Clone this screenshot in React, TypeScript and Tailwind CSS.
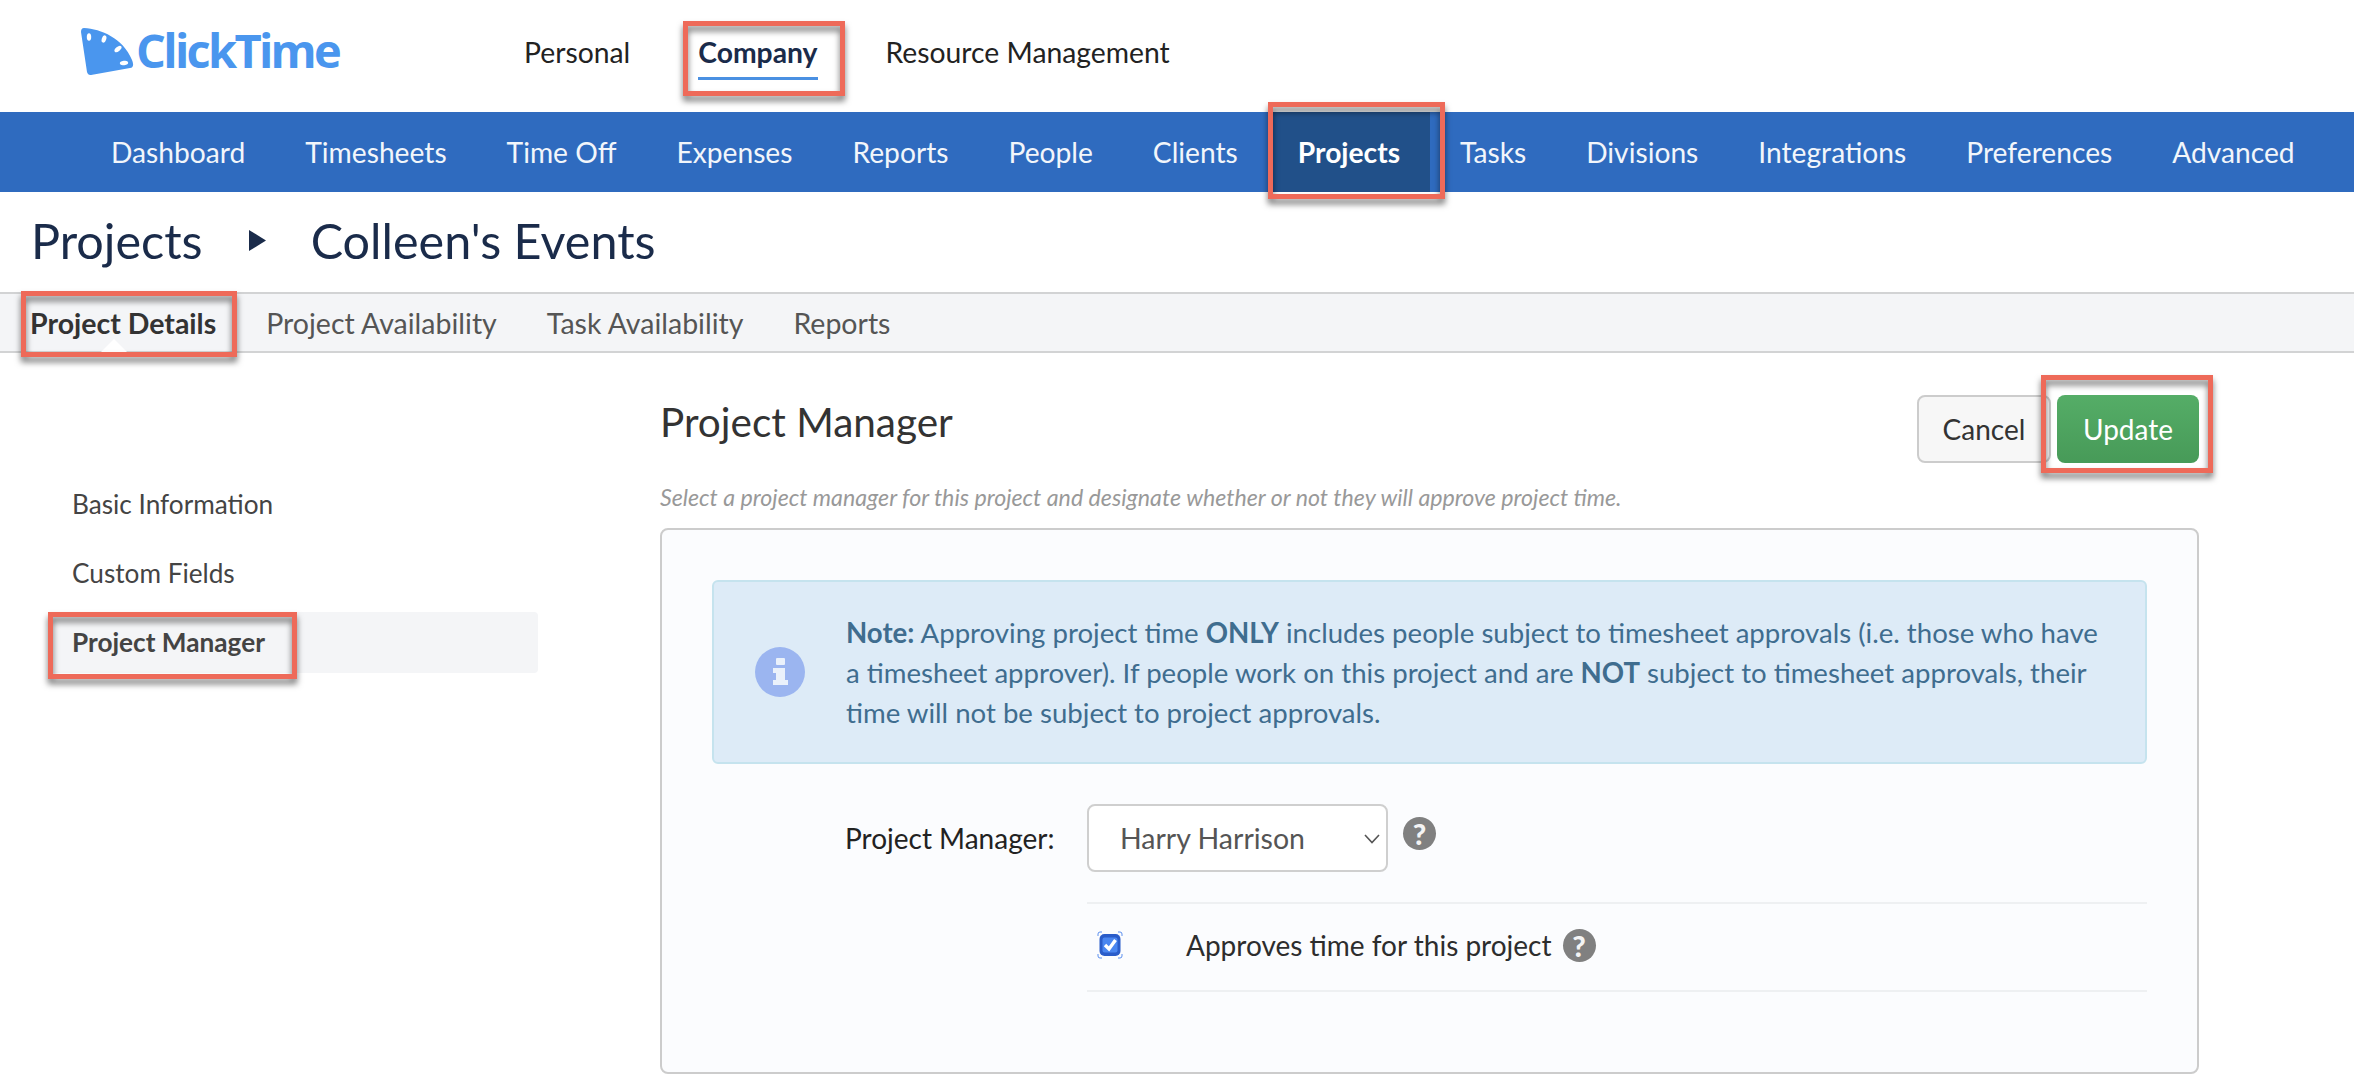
import { FC } from 'react'

const topLinks = ['Personal', 'Company', 'Resource Management']
const navLinks = [
  'Dashboard',
  'Timesheets',
  'Time Off',
  'Expenses',
  'Reports',
  'People',
  'Clients',
  'Projects',
  'Tasks',
  'Divisions',
  'Integrations',
  'Preferences',
  'Advanced',
]
const tabs = ['Project Details', 'Project Availability', 'Task Availability', 'Reports']

// the red marker rectangles drawn over the screenshot
const Marker: FC<{ className: string }> = ({ className }) => (
  <div
    className={`absolute pointer-events-none border-[5px] border-[#ee6a59] drop-shadow-[0_5px_3px_rgba(0,0,0,0.55)] ${className}`}
  />
)

const Help: FC = () => (
  <span className="flex h-[33px] w-[33px] shrink-0 items-center justify-center rounded-full bg-[#808080] text-[29px] font-black leading-none text-[#f4f4f4]">
    ?
  </span>
)

const Logo: FC = () => (
  <div className="flex items-start">
    <svg width="53" height="48" viewBox="0 0 53 48" className="mt-[3px]">
      <path
        d="M3 0 C20 1 42 10 51 32 Q54 39 49 40 L10 47 Q7 47.5 6 44 L0 4 Q0 0 3 0 Z"
        fill="#4a96ee"
      />
      <ellipse cx="8" cy="9" rx="2.2" ry="3.8" fill="#fff" />
      <ellipse cx="23" cy="11" rx="2.2" ry="3.8" transform="rotate(18 23 11)" fill="#fff" />
      <ellipse cx="37" cy="21" rx="2.2" ry="4.2" transform="rotate(50 37 21)" fill="#fff" />
      <ellipse cx="43" cy="35" rx="4.2" ry="2.2" transform="rotate(-8 43 35)" fill="#fff" />
    </svg>
    <span className="ml-[2px] font-['Open_Sans',sans-serif] text-[47px] font-bold leading-[50px] tracking-[-2.7px] text-[#4a96ee]">
      ClickTime
    </span>
  </div>
)

const Header: FC = () => (
  <div className="flex h-[112px] items-start bg-white pl-[81px]">
    <div className="w-[443px] pt-[25px]">
      <Logo />
    </div>
    <div className="flex gap-[68px] pt-[35px] text-[28.3px] leading-[34px] text-[#222]">
      {topLinks.map((link) => (
        <div
          key={link}
          className={`relative border-b-[3px] pb-[8px] ${
            link === 'Company' ? 'border-[#4a90e2] font-bold text-[#1a2b4a]' : 'border-transparent'
          }`}
        >
          {link}
          {link === 'Company' && <Marker className="-left-[15px] -top-[14px] h-[75px] w-[162px]" />}
        </div>
      ))}
    </div>
  </div>
)

const NavBar: FC = () => (
  <div className="flex h-[80px] bg-[#2f6bbf] pl-[81px] text-[28.2px] text-[#f2f6fb]">
    {navLinks.map((link) => (
      <div
        key={link}
        className={`relative flex items-center px-[30px] pt-[1px] ${
          link === 'Projects' ? 'bg-[#215089] font-bold text-white' : ''
        }`}
      >
        {link}
        {link === 'Projects' && <Marker className="left-0 -top-[10px] h-[97px] w-[177px]" />}
      </div>
    ))}
  </div>
)

const Title: FC = () => (
  <div className="flex h-[100px] items-center pl-[31px] pb-[3px] text-[48.5px] text-[#1a2b4a]">
    <span>Projects</span>
    <svg width="17" height="21" viewBox="0 0 17 21" className="ml-[46px] mr-[45px]">
      <path d="M0 0 L17 10.5 L0 21 Z" fill="#1a2b4a" />
    </svg>
    <span>Colleen's Events</span>
  </div>
)

const TabBar: FC = () => (
  <div className="flex h-[61px] gap-[50px] border-y-2 border-[#d2d3d4] bg-[#f4f5f7] pl-[30px] text-[28.5px] text-[#555]">
    {tabs.map((tab, i) => (
      <div
        key={tab}
        className={`relative flex items-center pt-[2px] ${i === 0 ? 'font-bold text-[#333]' : ''}`}
      >
        {tab}
        {i === 0 && (
          <>
            <svg width="28" height="14" viewBox="0 0 28 14" className="absolute bottom-[-2px] left-[70px]">
              <path d="M0 14 L14 0 L28 14 Z" fill="#fff" />
            </svg>
            <Marker className="-left-[9px] -top-[3px] h-[66px] w-[216px]" />
          </>
        )}
      </div>
    ))}
  </div>
)

const Sidebar: FC = () => (
  <div className="w-[660px] shrink-0 pl-[48px] pt-[128px] text-[26.2px] text-[#444]">
    <div className="flex h-[48px] items-center pl-[24px]">Basic Information</div>
    <div className="mt-[21px] flex h-[48px] items-center pl-[24px]">Custom Fields</div>
    <div className="relative mt-[14px] flex h-[61px] w-[490px] items-center rounded-[4px] bg-[#f4f5f7] pl-[24px] font-bold">
      Project Manager
      <Marker className="left-0 top-0 h-[67px] w-[249px]" />
    </div>
  </div>
)

const InfoIcon: FC = () => (
  <svg width="50" height="50" viewBox="0 0 50 50" className="shrink-0">
    <circle cx="25" cy="25" r="25" fill="#9bb5f0" />
    <rect x="21" y="11" width="9" height="7" rx="1" fill="#eaf1fb" />
    <path d="M18 21 H30 V33 H33 V38 H18 V33 H21 V26 H18 Z" fill="#eaf1fb" />
  </svg>
)

const Note: FC = () => (
  <div className="mx-[50px] mt-[50px] flex h-[184px] items-center rounded-[6px] border-2 border-[#c5e3ee] bg-[#ddebf7] pl-[41px] text-[#3f6d8f]">
    <InfoIcon />
    <p className="ml-[41px] w-[1266px] pt-[2px] text-[27.6px] leading-[40px]">
      <b>Note:</b> Approving project time <b>ONLY</b> includes people subject to timesheet approvals (i.e. those who
      have a timesheet approver). If people work on this project and are <b>NOT</b> subject to timesheet approvals,
      their time will not be subject to project approvals.
    </p>
  </div>
)

const ManagerForm: FC = () => (
  <div className="mx-[50px] flex text-[28px]">
    <label className="w-[375px] shrink-0 pl-[133px] pt-[56px] leading-[36px] text-[#222]">Project Manager:</label>
    <div className="flex-1">
      <div className="flex h-[140px] items-start border-b-2 border-[#eef0f2] pt-[40px]">
        <div className="relative w-[301px]">
          <select className="h-[68px] w-full appearance-none rounded-[8px] border-2 border-[#cfcfcf] bg-white pl-[31px] text-[28.5px] text-[#555] outline-none">
            <option>Harry Harrison</option>
          </select>
          <svg
            width="16"
            height="10"
            viewBox="0 0 16 10"
            className="pointer-events-none absolute right-[8px] top-[30px]"
          >
            <path d="M1 1 L8 8.5 L15 1" fill="none" stroke="#555" strokeWidth="1.6" />
          </svg>
        </div>
        <div className="ml-[15px] mt-[13px]">
          <Help />
        </div>
      </div>
      <div className="flex h-[88px] items-center border-b-2 border-[#eef0f2] pl-[10px]">
        <svg width="26" height="28" viewBox="0 0 26 28" className="mb-[5px] shrink-0">
          <path
            d="M1 5 V3 Q1 1 3 1 H5 M21 1 H23 Q25 1 25 3 V5 M25 23 V25 Q25 27 23 27 H21 M5 27 H3 Q1 27 1 25 V23"
            fill="none"
            stroke="#5b8fef"
            strokeWidth="1"
          />
          <rect x="2.5" y="3" width="21" height="22" rx="5" fill="#2a5cc9" />
          <rect x="5.5" y="6.5" width="15" height="15" rx="2" fill="#4a86f0" />
          <path d="M8 14 L12 18 L18.5 9" fill="none" stroke="#fff" strokeWidth="3.4" />
        </svg>
        <span className="mb-[4px] ml-[63px] text-[#2d2d2d]">Approves time for this project</span>
        <div className="mb-[4px] ml-[11px]">
          <Help />
        </div>
      </div>
    </div>
  </div>
)

const Content: FC = () => (
  <div className="w-[1539px] shrink-0">
    <div className="flex h-[127px] items-start justify-between pt-[42px]">
      <h1 className="pt-[3px] text-[40.5px] leading-[48px] text-[#333]">Project Manager</h1>
      <div className="flex gap-[6px] text-[28px]">
        <button className="h-[68px] w-[134px] rounded-[8px] border-2 border-[#cccccc] bg-[#f7f7f7] text-[#333]">
          Cancel
        </button>
        <div className="relative">
          <button className="h-[68px] w-[142px] rounded-[8px] bg-linear-to-b from-[#55ad67] to-[#479a58] text-white">
            Update
          </button>
          <Marker className="-left-[16px] -top-[20px] h-[98px] w-[172px]" />
        </div>
      </div>
    </div>
    <p className="h-[48px] pt-[3px] text-[23.2px] italic leading-[28px] text-[#999]">
      Select a project manager for this project and designate whether or not they will approve project time.
    </p>
    <div className="h-[546px] rounded-[8px] border-2 border-[#cccccc] bg-[#fbfcfe]">
      <Note />
      <ManagerForm />
    </div>
  </div>
)

export default function App() {
  return (
    <div className="h-[1084px] w-[2354px] overflow-hidden bg-white font-['Lato',sans-serif]">
      <Header />
      <NavBar />
      <Title />
      <TabBar />
      <div className="flex">
        <Sidebar />
        <Content />
      </div>
    </div>
  )
}
